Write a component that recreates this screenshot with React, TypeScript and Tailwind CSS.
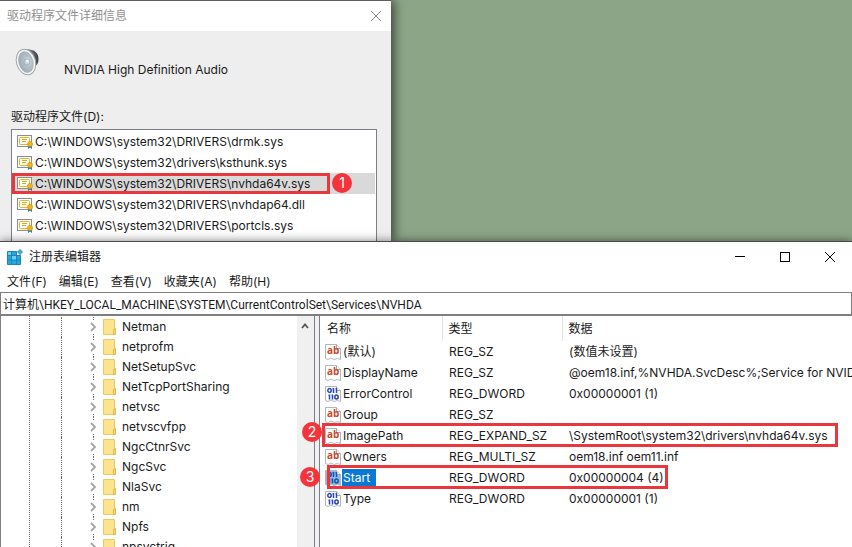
import type { ReactNode } from "react";

const drivers = [
  "C:\\WINDOWS\\system32\\DRIVERS\\drmk.sys",
  "C:\\WINDOWS\\system32\\drivers\\ksthunk.sys",
  "C:\\WINDOWS\\system32\\DRIVERS\\nvhda64v.sys",
  "C:\\WINDOWS\\system32\\DRIVERS\\nvhdap64.dll",
  "C:\\WINDOWS\\system32\\DRIVERS\\portcls.sys",
];

const menus = ["文件(F)", "编辑(E)", "查看(V)", "收藏夹(A)", "帮助(H)"];

const keys = [
  "Netman",
  "netprofm",
  "NetSetupSvc",
  "NetTcpPortSharing",
  "netvsc",
  "netvscvfpp",
  "NgcCtnrSvc",
  "NgcSvc",
  "NlaSvc",
  "nm",
  "Npfs",
  "npsvctrig",
];

type Value = { name: string; type: string; data: string; mark?: "path" | "start" };

const values: Value[] = [
  { name: "(默认)", type: "REG_SZ", data: "(数值未设置)" },
  { name: "DisplayName", type: "REG_SZ", data: "@oem18.inf,%NVHDA.SvcDesc%;Service for NVIDIA High Definition Audio" },
  { name: "ErrorControl", type: "REG_DWORD", data: "0x00000001 (1)" },
  { name: "Group", type: "REG_SZ", data: "" },
  { name: "ImagePath", type: "REG_EXPAND_SZ", data: "\\SystemRoot\\system32\\drivers\\nvhda64v.sys", mark: "path" },
  { name: "Owners", type: "REG_MULTI_SZ", data: "oem18.inf oem11.inf" },
  { name: "Start", type: "REG_DWORD", data: "0x00000004 (4)", mark: "start" },
  { name: "Type", type: "REG_DWORD", data: "0x00000001 (1)" },
];

function SpeakerIcon() {
  return (
    <svg width="28" height="30" viewBox="0 0 28 30" aria-hidden="true">
      <defs>
        <linearGradient id="body" x1="0" x2="1">
          <stop offset="0" stopColor="#8a8a8a" />
          <stop offset="1" stopColor="#3c3f40" />
        </linearGradient>
        <radialGradient id="cone" cx="0.65" cy="0.5" r="0.7">
          <stop offset="0" stopColor="#dfe7ea" />
          <stop offset="0.35" stopColor="#b4c1c8" />
          <stop offset="1" stopColor="#97a6ae" />
        </radialGradient>
      </defs>
      <path d="M13 2 L20 3.500 Q25 7 24.500 13 Q24 18 21 19 L16 27 Z" fill="url(#body)" />
      <ellipse cx="12" cy="15" rx="9.500" ry="13" transform="rotate(-16 12 15)" fill="#f6f7f7" stroke="#a2a5a7" />
      <ellipse cx="12" cy="15" rx="7.500" ry="11" transform="rotate(-16 12 15)" fill="url(#cone)" />
      <circle cx="13" cy="15" r="3" fill="#c9d3d8" stroke="#93a1a9" strokeWidth="0.600" />
      <circle cx="13.500" cy="14" r="1.500" fill="#eef2f3" />
    </svg>
  );
}

function CertIcon() {
  return (
    <svg width="16" height="14" viewBox="0 0 16 14" className="shrink-0" aria-hidden="true">
      <rect x="0.500" y="0.500" width="14" height="11" fill="#fdfdf6" stroke="#8c8f92" />
      <rect x="2.500" y="2.500" width="10" height="7" rx="1" fill="#fffef5" stroke="#e3b42c" />
      <path d="M5 4.500 H10 M5 6.500 H9" stroke="#d9a623" />
      <path d="M11 10 H15 V14 L13 12.500 L11 14 Z" fill="#2478b5" />
      <circle cx="13" cy="9" r="2.600" fill="#f0b31c" stroke="#d39510" strokeWidth="0.600" />
    </svg>
  );
}

function RegeditIcon() {
  return (
    <svg width="16" height="16" viewBox="0 0 16 16" aria-hidden="true">
      <path d="M0.500 2.500 H9.500 V6.500 H13.500 V15.500 H0.500 Z" fill="#27a7df" stroke="#1b86b8" />
      <path d="M1 3 H4 V6 H1 Z M5 7 H9 V11 H5 Z" fill="#6fcdf2" />
      <path d="M0.500 6.500 H13.500 M0.500 11 H13.500 M4.500 2.500 V15.500 M9.500 6.500 V15.500" stroke="#1b86b8" />
      <path d="M13 0.500 L15.500 3 L13 5.500 L10.500 3 Z" fill="#3fb4e4" stroke="#14779f" strokeWidth="0.800" />
    </svg>
  );
}

function FolderIcon() {
  return (
    <svg width="14" height="16" viewBox="0 0 14 16" className="shrink-0" aria-hidden="true">
      <path d="M0.500 0.500 H11.500 V10 H12.500 V15.500 H0.500 Z" fill="#fce48f" stroke="#ecc864" />
      <path d="M10.500 15.500 V10.500 L12.500 9.500 V15.500 Z" fill="#fbdc74" stroke="#e3b74a" />
    </svg>
  );
}

function Page({ children, selected }: { children: ReactNode; selected?: boolean }) {
  return (
    <svg width="17" height="16" viewBox="0 0 17 16" className="shrink-0" aria-hidden="true">
      <path
        d="M0.500 0.500 H11.500 L15.500 4.500 V15.500 L12.500 14.500 L9 15.500 L6 14 L3 15.500 L0.500 14.500 Z"
        fill={selected ? "#8dbbe6" : "#ffffff"}
        stroke="#b4b7ba"
      />
      <path d="M11.500 0.500 V4.500 H15.500" fill="#ffffff" stroke="#a5a8ab" />
      {children}
    </svg>
  );
}

function TextValueIcon() {
  return (
    <Page>
      <text x="2" y="10" fontSize="10" fontWeight="700" fill="#c8492c" fontFamily="'Open Sans', sans-serif">
        ab
      </text>
    </Page>
  );
}

function BinaryValueIcon({ selected }: { selected?: boolean }) {
  return (
    <Page selected={selected}>
      <g fill="none" stroke={selected ? "#1c4fae" : "#2b48b8"} strokeWidth="1.500">
        <ellipse cx="4.500" cy="4.500" rx="1.700" ry="1.900" />
        <path d="M8.500 2 V7 M7.500 2.700 H8.500 M11.500 2 V7 M10.500 2.700 H11.500" />
        <path d="M4.500 8.500 V13.500 M3.500 9.200 H4.500 M7.500 8.500 V13.500 M6.500 9.200 H7.500" />
        <ellipse cx="11.500" cy="11" rx="1.700" ry="1.900" />
      </g>
    </Page>
  );
}

function Badge({ n, place }: { n: number; place: string }) {
  return (
    <span
      className={`absolute z-10 flex size-5 items-center justify-center rounded-full bg-[#f5333a] text-sm leading-none text-white ${place}`}
    >
      {n}
    </span>
  );
}

function DriverDialog() {
  return (
    <section
      aria-label="驱动程序文件详细信息"
      className="flex w-[391px] shrink-0 flex-col border-t border-[#5f5f5f] bg-[#eeeeee] shadow-[3px_0_10px_rgba(0,0,0,0.6)]"
    >
      <header className="flex h-[30px] shrink-0 items-center justify-between bg-white pr-[7px] pl-[7px]">
        <h1 className="text-[#8f8f8f]">驱动程序文件详细信息</h1>
        <button aria-label="关闭" className="flex size-4 items-center justify-center">
          <svg width="12" height="12" viewBox="0 0 12 12" stroke="#888888" aria-hidden="true">
            <path d="M1 1 L11 11 M11 1 L1 11" />
          </svg>
        </button>
      </header>
      <div className="flex h-[76px] shrink-0 items-start gap-[22px] pt-4 pl-3.5">
        <SpeakerIcon />
        <p className="pt-[13px] leading-5">NVIDIA High Definition Audio</p>
      </div>
      <h2 id="files" className="h-[22px] shrink-0 pl-[11px] leading-5">
        驱动程序文件(D):
      </h2>
      <ul
        aria-labelledby="files"
        className="mr-3.5 ml-[11px] flex-1 border border-b-0 border-[#7c7f88] bg-white pt-px pr-px"
      >
        {drivers.map((path, i) => (
          <li key={path} className="relative">
            <button
              className={`flex h-[21px] w-full items-center gap-0.5 pl-[5px] text-left whitespace-nowrap ${
                i === 2 ? "bg-[#d9d9d9]" : ""
              }`}
            >
              <CertIcon />
              {path}
            </button>
            {i === 2 && (
              <>
                <span className="absolute inset-y-0 left-0 w-[318px] border-3 border-[#e8383d]" />
                <Badge n={1} place="left-[320px] top-0" />
              </>
            )}
          </li>
        ))}
      </ul>
    </section>
  );
}

function KeyTree() {
  return (
    <nav aria-label="注册表项" className="flex w-[314px] shrink-0 border-l border-[#7f7f7f]">
      <ul className="ml-7 flex-1 overflow-hidden border-l border-dotted border-[#6a6a6a] pt-px">
        {keys.map((name) => (
          <li key={name} className="ml-[31px] flex h-5 border-l border-dotted border-[#6a6a6a]">
            <button className="ml-[27px] flex items-center gap-1.5 text-left">
              <span className="flex h-5 flex-col items-center justify-between">
                <span className="h-[3px] border-l border-dotted border-[#6a6a6a]" />
                <svg width="8" height="10" viewBox="0 0 8 10" fill="none" stroke="#a3a3a3" strokeWidth="1.800" aria-hidden="true">
                  <path d="M2 1 L6 5 L2 9" />
                </svg>
                <span className="h-[3px] border-l border-dotted border-[#6a6a6a]" />
              </span>
              <span className="flex items-center gap-[5px]">
                <FolderIcon />
                {name}
              </span>
            </button>
          </li>
        ))}
      </ul>
      <div className="flex w-[17px] shrink-0 justify-center bg-[#f0f0f0] pr-0.5">
        <button aria-label="向上滚动" className="flex h-5 items-center">
          <svg width="8" height="6" viewBox="0 0 8 6" fill="none" stroke="#555555" strokeWidth="1.800" aria-hidden="true">
            <path d="M1 5 L4 1.500 L7 5" />
          </svg>
        </button>
      </div>
    </nav>
  );
}

function ValueTable() {
  return (
    <div className="min-w-0 flex-1">
      <table className="w-full table-fixed border-collapse whitespace-nowrap">
        <colgroup>
          <col className="w-[122px]" />
          <col className="w-[120px]" />
          <col />
        </colgroup>
        <thead>
          <tr className="h-[25px] text-left">
            <th className="border-r border-[#e2e2e2] p-0 pl-[7px] font-normal">名称</th>
            <th className="border-r border-[#e2e2e2] p-0 pl-1.5 font-normal">类型</th>
            <th className="p-0 pl-1.5 font-normal">数据</th>
          </tr>
        </thead>
        <tbody>
          {values.map(({ name, type, data, mark }) => (
            <tr key={name} className="h-[21px]">
              <td className="relative p-0 pl-[5px]">
                <div className="flex items-center">
                  {type === "REG_DWORD" ? <BinaryValueIcon selected={mark === "start"} /> : <TextValueIcon />}
                  <span className={mark === "start" ? "bg-[#0a78d4] pr-1.5 pl-px leading-[18px] text-white" : "pl-px leading-[18px]"}>
                    {name}
                  </span>
                </div>
                {mark === "path" && (
                  <>
                    <span className="absolute -top-0.5 left-0.5 h-6 w-[516px] border-3 border-[#e8383d]" />
                    <Badge n={2} place="-left-[18px] -top-[3px]" />
                  </>
                )}
                {mark === "start" && (
                  <>
                    <span className="absolute -top-0.5 left-[7px] h-6 w-[341px] border-3 border-[#e8383d]" />
                    <Badge n={3} place="-left-5 top-0" />
                  </>
                )}
              </td>
              <td className="p-0 pl-[7px]">{type}</td>
              <td className="overflow-hidden p-0 pl-[7px]">{data}</td>
            </tr>
          ))}
        </tbody>
      </table>
    </div>
  );
}

function RegistryEditor() {
  return (
    <section
      aria-label="注册表编辑器"
      className="relative flex min-h-0 flex-1 flex-col border-t border-[#4b4b4b] bg-white shadow-[0_0_9px_rgba(0,0,0,0.5)]"
    >
      <header className="flex h-[29px] shrink-0 items-center gap-1.5 pl-[7px]">
        <RegeditIcon />
        <h1 className="flex-1">注册表编辑器</h1>
        <div className="flex h-full">
          <button aria-label="最小化" className="flex w-[45px] items-center justify-center">
            <svg width="10" height="10" viewBox="0 0 10 10" stroke="#000000" aria-hidden="true">
              <path d="M0 4.500 H10" />
            </svg>
          </button>
          <button aria-label="最大化" className="flex w-[45px] items-center justify-center">
            <svg width="10" height="10" viewBox="0 0 10 10" fill="none" stroke="#000000" aria-hidden="true">
              <rect x="0.500" y="0.500" width="9" height="9" />
            </svg>
          </button>
          <button aria-label="关闭" className="flex w-[45px] items-center justify-center">
            <svg width="10" height="10" viewBox="0 0 10 10" stroke="#000000" aria-hidden="true">
              <path d="M0 0 L10 10 M10 0 L0 10" />
            </svg>
          </button>
        </div>
      </header>
      <div role="menubar" className="flex h-[21px] shrink-0 items-center gap-3 pl-[7px]">
        {menus.map((label) => (
          <button key={label} role="menuitem">
            {label}
          </button>
        ))}
      </div>
      <input
        aria-label="地址"
        defaultValue="计算机\HKEY_LOCAL_MACHINE\SYSTEM\CurrentControlSet\Services\NVHDA"
        className="h-6 w-full shrink-0 border border-b-2 border-[#7f7f7f] bg-white pl-0.5 font-['Roboto','Noto_Sans_CJK_SC',sans-serif] outline-none"
      />
      <div className="flex min-h-0 flex-1 overflow-hidden">
        <KeyTree />
        <div className="w-1.5 shrink-0 border-x border-[#7c7f88] bg-[#f0f0f0]" />
        <ValueTable />
      </div>
    </section>
  );
}

export default function App() {
  return (
    <main className="flex h-screen flex-col overflow-hidden bg-[#8ca587] font-['Inter','Noto_Sans_CJK_SC',sans-serif] text-xs text-[#1a1a1a]">
      <div className="flex h-[241px] shrink-0 overflow-hidden">
        <DriverDialog />
      </div>
      <RegistryEditor />
    </main>
  );
}
